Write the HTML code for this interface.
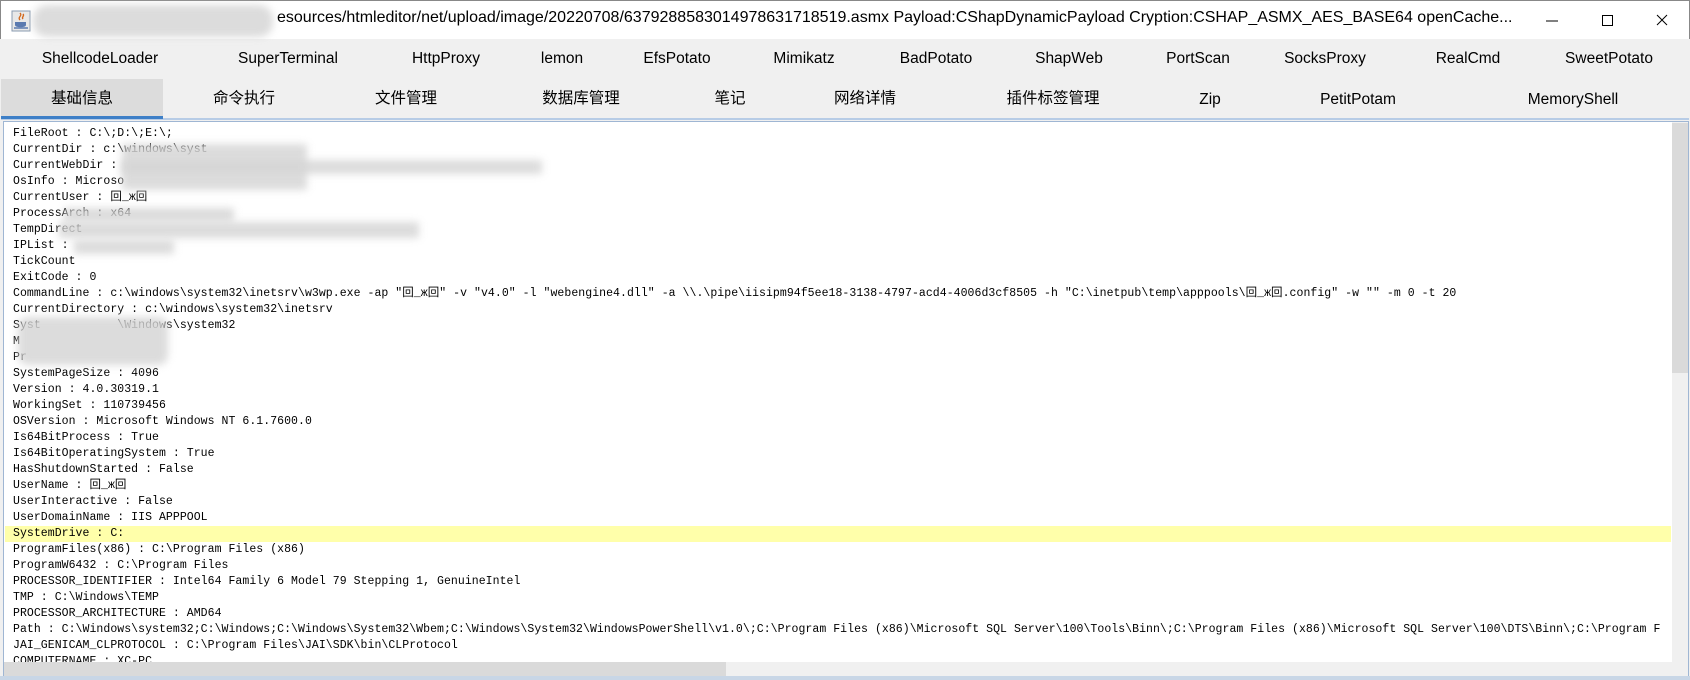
<!DOCTYPE html>
<html><head><meta charset="utf-8"><style>
*{margin:0;padding:0;box-sizing:border-box}
body{width:1690px;height:680px;overflow:hidden;background:#f0f0f0;position:relative;font-family:"Segoe UI","Liberation Sans","Noto Sans CJK SC",sans-serif}
.title{position:absolute;left:0;top:0;width:1690px;height:39px;background:#fff;border:1px solid #888;border-bottom:none}
.ttxt{position:absolute;left:276px;top:8px;font-size:16px;color:#000;white-space:nowrap;width:1236px;overflow:hidden}
.blur{position:absolute;background:#d6d6d6;filter:blur(4px);opacity:.85}
.tb{position:absolute;font-size:15.5px;color:#000;white-space:nowrap;transform:translateX(-50%);line-height:22px;height:22px}
.r1{top:48px}.r2{top:88px}
.sel{position:absolute;left:1px;top:79px;width:162px;height:40px;background:#dcdcdc}
.selbar{position:absolute;left:1px;top:116px;width:162px;height:3px;background:#3d7fc7}
.tabline{position:absolute;left:1px;top:118px;width:1688px;height:2px;background:#b7cce6}
.area{position:absolute;left:3px;top:121px;width:1686px;height:557px;background:#fff;border:1px solid #9fb6d3;overflow:hidden}
.txt{position:absolute;left:9px;top:4px;font-family:"Liberation Mono",monospace;font-size:11.5px;letter-spacing:.05px;line-height:16px;color:#000;white-space:pre}
.hl{position:absolute;left:1px;top:404px;width:1666px;height:16px;background:#ffffaa}
.vs{position:absolute;left:1668px;top:0;width:17px;height:540px;background:#f0f0f0}
.vth{position:absolute;left:1668px;top:1px;width:17px;height:250px;background:#dadada}
.hs{position:absolute;left:0;top:540px;width:1685px;height:14px;background:#f0f0f0}
.hth{position:absolute;left:0;top:540px;width:722px;height:14px;background:#dadada}
.bot{position:absolute;left:0;top:676px;width:1690px;height:4px;background:#c8d6e6}
</style></head><body>
<div class="title">
<svg style="position:absolute;left:10px;top:9px" width="20" height="22" viewBox="0 0 20 22"><rect x="1" y="1" width="18" height="20" fill="#e8e8e8" stroke="#8a9bb0"/><path d="M9 3c3 3-3 4 0 7M12 4c2 2-2 3 0 5" stroke="#d2691e" stroke-width="1.4" fill="none"/><path d="M4 12h11v3c0 3-11 3-11 0z" fill="#5a7ab0"/><path d="M3 18h14" stroke="#5a7ab0" stroke-width="1.5"/></svg>
<div class="blur" style="left:32px;top:4px;width:240px;height:32px;border-radius:14px"></div>
<div class="ttxt">esources/htmleditor/net/upload/image/20220708/6379288583014978631718519.asmx Payload:CShapDynamicPayload Cryption:CSHAP_ASMX_AES_BASE64 openCache...</div>
<svg style="position:absolute;left:1540px;top:10px" width="130" height="20"><path d="M5 10h12" stroke="#000" stroke-width="1"/><rect x="61.5" y="4.5" width="10" height="10" fill="none" stroke="#000"/><path d="M116 4l10 10M126 4l-10 10" stroke="#000" stroke-width="1"/></svg>
</div>
<div class="tb r1" style="left:100px">ShellcodeLoader</div>
<div class="tb r1" style="left:288px">SuperTerminal</div>
<div class="tb r1" style="left:446px">HttpProxy</div>
<div class="tb r1" style="left:562px">lemon</div>
<div class="tb r1" style="left:677px">EfsPotato</div>
<div class="tb r1" style="left:804px">Mimikatz</div>
<div class="tb r1" style="left:936px">BadPotato</div>
<div class="tb r1" style="left:1069px">ShapWeb</div>
<div class="tb r1" style="left:1198px">PortScan</div>
<div class="tb r1" style="left:1325px">SocksProxy</div>
<div class="tb r1" style="left:1468px">RealCmd</div>
<div class="tb r1" style="left:1609px">SweetPotato</div>
<div class="sel"></div>
<div class="tabline"></div><div class="selbar"></div>
<div class="tb r2" style="left:82px">基础信息</div>
<div class="tb r2" style="left:244px">命令执行</div>
<div class="tb r2" style="left:406px">文件管理</div>
<div class="tb r2" style="left:581px">数据库管理</div>
<div class="tb r2" style="left:730px">笔记</div>
<div class="tb r2" style="left:865px">网络详情</div>
<div class="tb r2" style="left:1053px">插件标签管理</div>
<div class="tb r2" style="left:1210px;top:89px">Zip</div>
<div class="tb r2" style="left:1358px;top:89px">PetitPotam</div>
<div class="tb r2" style="left:1573px;top:89px">MemoryShell</div>
<div class="area">
<div class="hl"></div>
<div class="txt">FileRoot : C:\;D:\;E:\;
CurrentDir : c:\windows\syst
CurrentWebDir :
OsInfo : Microso
CurrentUser : 回_ж回
ProcessArch : x64
TempDirect
IPList :
TickCount
ExitCode : 0
CommandLine : c:\windows\system32\inetsrv\w3wp.exe -ap "回_ж回" -v "v4.0" -l "webengine4.dll" -a \\.\pipe\iisipm94f5ee18-3138-4797-acd4-4006d3cf8505 -h "C:\inetpub\temp\apppools\回_ж回.config" -w "" -m 0 -t 20
CurrentDirectory : c:\windows\system32\inetsrv
Syst           \Windows\system32
M
Pr
SystemPageSize : 4096
Version : 4.0.30319.1
WorkingSet : 110739456
OSVersion : Microsoft Windows NT 6.1.7600.0
Is64BitProcess : True
Is64BitOperatingSystem : True
HasShutdownStarted : False
UserName : 回_ж回
UserInteractive : False
UserDomainName : IIS APPPOOL
SystemDrive : C:
ProgramFiles(x86) : C:\Program Files (x86)
ProgramW6432 : C:\Program Files
PROCESSOR_IDENTIFIER : Intel64 Family 6 Model 79 Stepping 1, GenuineIntel
TMP : C:\Windows\TEMP
PROCESSOR_ARCHITECTURE : AMD64
Path : C:\Windows\system32;C:\Windows;C:\Windows\System32\Wbem;C:\Windows\System32\WindowsPowerShell\v1.0\;C:\Program Files (x86)\Microsoft SQL Server\100\Tools\Binn\;C:\Program Files (x86)\Microsoft SQL Server\100\DTS\Binn\;C:\Program F
JAI_GENICAM_CLPROTOCOL : C:\Program Files\JAI\SDK\bin\CLProtocol
COMPUTERNAME : XC-PC</div>
<div class="blur" style="left:118px;top:22px;width:185px;height:46px"></div>
<div class="blur" style="left:118px;top:38px;width:420px;height:14px"></div>
<div class="blur" style="left:60px;top:86px;width:170px;height:14px"></div>
<div class="blur" style="left:55px;top:100px;width:360px;height:16px"></div>
<div class="blur" style="left:70px;top:118px;width:100px;height:14px"></div>
<div class="blur" style="left:14px;top:195px;width:150px;height:48px;border-radius:10px"></div>
<div class="vs"></div><div class="vth"></div>
<div class="hs"></div><div class="hth"></div>
</div>
<div class="bot"></div>
</body></html>
